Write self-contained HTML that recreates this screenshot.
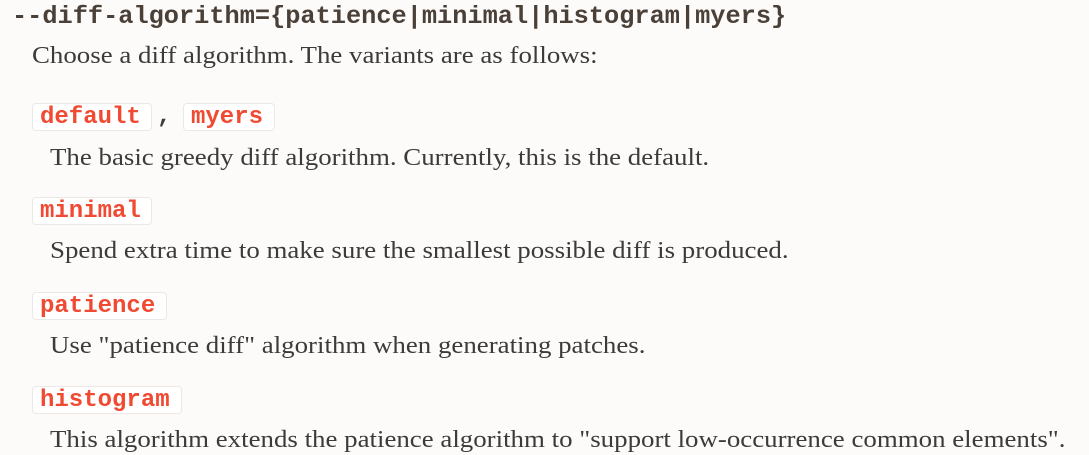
<!DOCTYPE html>
<html><head><meta charset="utf-8"><style>
html,body{margin:0;padding:0;background:#fcfbfa;width:1089px;height:455px;overflow:hidden}
.a{position:absolute;white-space:nowrap}
.h{font-family:"Liberation Mono",monospace;font-weight:bold;font-size:25.3px;color:#4a4038;left:12px;top:2px;line-height:30px}
.t{font-family:"Liberation Serif",serif;font-size:24px;color:#3e3a38;line-height:30px;transform:scaleX(1.12);transform-origin:0 0}
.c{position:absolute;background:#fff;border:1px solid #ebe8e6;border-radius:4px;height:28px;font-family:"Liberation Mono",monospace;font-weight:bold;font-size:24px;color:#f04a33;line-height:28px;padding:0 7px;box-sizing:border-box}
</style></head><body>
<div class="a h">--diff-algorithm={patience|minimal|histogram|myers}</div>
<div class="a t" style="left:32px;top:41px">Choose a diff algorithm. The variants are as follows:</div>
<div class="c" style="left:32px;top:103px;width:120px">default</div>
<div class="a" style="left:157px;top:102px;font-family:'Liberation Mono',monospace;font-weight:bold;font-size:24px;color:#3e3a38;line-height:30px">,</div>
<div class="c" style="left:183px;top:103px;width:92px">myers</div>
<div class="a t" style="left:50px;top:143px">The basic greedy diff algorithm. Currently, this is the default.</div>
<div class="c" style="left:32px;top:197px;width:120px">minimal</div>
<div class="a t" style="left:50px;top:236px">Spend extra time to make sure the smallest possible diff is produced.</div>
<div class="c" style="left:32px;top:292px;width:135px">patience</div>
<div class="a t" style="left:50px;top:331px">Use "patience diff" algorithm when generating patches.</div>
<div class="c" style="left:32px;top:386px;width:150px">histogram</div>
<div class="a t" style="left:50px;top:425px">This algorithm extends the patience algorithm to "support low-occurrence common elements".</div>
</body></html>
